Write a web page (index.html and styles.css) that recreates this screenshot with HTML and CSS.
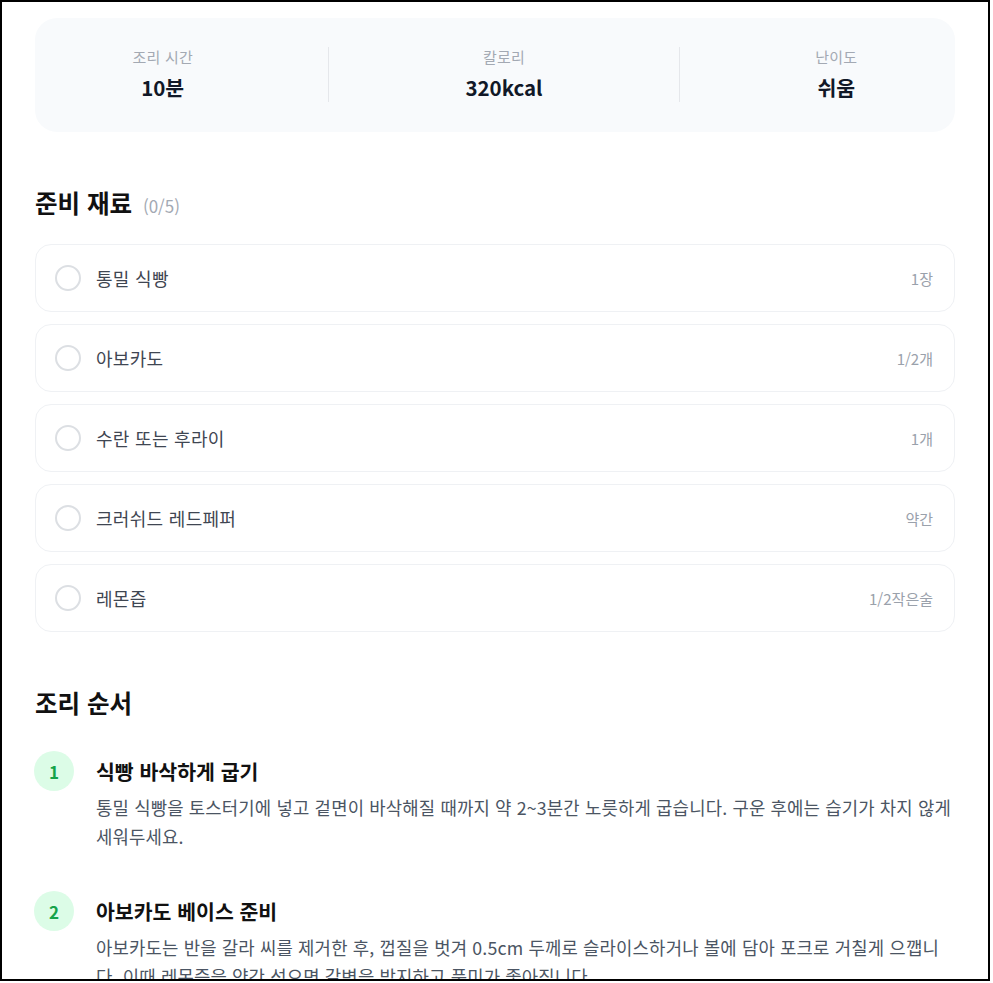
FILE: index.html
```html
<!DOCTYPE html>
<html lang="ko">
<head>
<meta charset="utf-8">
<title>레시피</title>
<link rel="stylesheet" href="styles.css">
</head>
<body>
<div class="frame">
  <div class="content">
    <section class="stats">
      <div class="stat stat-first">
        <div class="stat-label">조리 시간</div>
        <div class="stat-value">10분</div>
      </div>
      <div class="divider"></div>
      <div class="stat stat-mid">
        <div class="stat-label">칼로리</div>
        <div class="stat-value">320kcal</div>
      </div>
      <div class="divider"></div>
      <div class="stat stat-last">
        <div class="stat-label">난이도</div>
        <div class="stat-value">쉬움</div>
      </div>
    </section>

    <h2 class="section-title ing-title">준비 재료 <span class="count">(0/5)</span></h2>
    <ul class="ingredients">
      <li class="ing"><span class="check"></span><span class="ing-name">통밀 식빵</span><span class="ing-amt">1장</span></li>
      <li class="ing"><span class="check"></span><span class="ing-name">아보카도</span><span class="ing-amt">1/2개</span></li>
      <li class="ing"><span class="check"></span><span class="ing-name">수란 또는 후라이</span><span class="ing-amt">1개</span></li>
      <li class="ing"><span class="check"></span><span class="ing-name">크러쉬드 레드페퍼</span><span class="ing-amt">약간</span></li>
      <li class="ing"><span class="check"></span><span class="ing-name">레몬즙</span><span class="ing-amt">1/2작은술</span></li>
    </ul>

    <h2 class="section-title steps-title">조리 순서</h2>
    <ol class="steps">
      <li class="step">
        <span class="step-num">1</span>
        <div class="step-body">
          <h3 class="step-title">식빵 바삭하게 굽기</h3>
          <p class="step-desc">통밀 식빵을 토스터기에 넣고 겉면이 바삭해질 때까지 약 2~3분간 노릇하게 굽습니다. 구운 후에는 습기가 차지 않게 세워두세요.</p>
        </div>
      </li>
      <li class="step">
        <span class="step-num">2</span>
        <div class="step-body">
          <h3 class="step-title">아보카도 베이스 준비</h3>
          <p class="step-desc">아보카도는 반을 갈라 씨를 제거한 후, 껍질을 벗겨 0.5cm 두께로 슬라이스하거나 볼에 담아 포크로 거칠게 으깹니다. 이때 레몬즙을 약간 섞으면 갈변을 방지하고 풍미가 좋아집니다.</p>
        </div>
      </li>
    </ol>
  </div>
</div>
</body>
</html>
```

FILE: styles.css
```css
* { box-sizing: border-box; }
html, body { margin: 0; padding: 0; background: #fff; }
body {
  font-family: "Noto Sans CJK KR", "Noto Sans", sans-serif;
  color: #111827;
}
.frame {
  width: 990px;
  height: 981px;
  border: 2px solid #000;
  overflow: hidden;
  background: #fff;
}
.content {
  width: 920px;
  margin: 0 auto;
  padding-top: 16px;
}

/* stats */
.stats {
  display: flex;
  align-items: stretch;
  background: #f8fafc;
  border-radius: 22px;
  padding: 29px 0 30px;
  height: 114px;
}
.stat {
  display: flex;
  flex-direction: column;
  align-items: center;
  gap: 6px;
}
.stat-first { width: 294px; padding-right: 38px; }
.stat-mid { width: 350px; }
.stat-last { width: 276px; padding-left: 38px; }
.divider { width: 1px; background: #e5e7eb; }
.stat-label {
  font-size: 15px;
  line-height: 20px;
  color: #a3a9b3;
  letter-spacing: 0.2px;
}
.stat-value {
  font-size: 20.5px;
  line-height: 28px;
  font-weight: 700;
  color: #111827;
}

/* section titles */
.section-title {
  margin: 0;
  font-size: 24.5px;
  line-height: 32px;
  font-weight: 700;
  color: #111111;
}
.ing-title { margin-top: 55px; margin-bottom: 22px; }
.count {
  font-size: 17px;
  font-weight: 400;
  color: #a3a9b3;
  margin-left: 4px;
}
.steps-title { margin-top: 55px; margin-bottom: 32px; }

/* ingredients */
.ingredients {
  list-style: none;
  margin: 0;
  padding: 0;
  display: flex;
  flex-direction: column;
  gap: 12px;
}
.ing {
  display: flex;
  align-items: center;
  height: 68px;
  border: 1px solid #eff1f4;
  border-radius: 16px;
  padding: 0 21px 0 19px;
  background: #fff;
}
.check {
  width: 26px;
  height: 26px;
  border: 2px solid #dcdfe3;
  border-radius: 50%;
  flex: none;
}
.ing-name {
  margin-left: 15px;
  font-size: 18px;
  letter-spacing: 0.3px;
  color: #3f4652;
  flex: 1;
}
.ing-amt {
  font-size: 15px;
  color: #9aa1ab;
}

/* steps */
.steps {
  list-style: none;
  margin: 0;
  padding: 0;
  display: flex;
  flex-direction: column;
  gap: 40px;
}
.step {
  display: flex;
  align-items: flex-start;
  gap: 22px;
}
.step-num {
  flex: none;
  width: 40px;
  height: 40px;
  border-radius: 50%;
  background: #dcfce7;
  color: #16a34a;
  font-weight: 700;
  font-size: 17px;
  display: flex;
  align-items: center;
  justify-content: center;
  margin-left: -1px;
}
.step-body { flex: 1; }
.step-title {
  margin: 6px 0 0;
  font-size: 20.5px;
  line-height: 28px;
  font-weight: 700;
  color: #111111;
}
.step-desc {
  margin: 8px 0 0;
  font-size: 17.8px;
  line-height: 29px;
  letter-spacing: 0.15px;
  color: #4b5563;
}
```
